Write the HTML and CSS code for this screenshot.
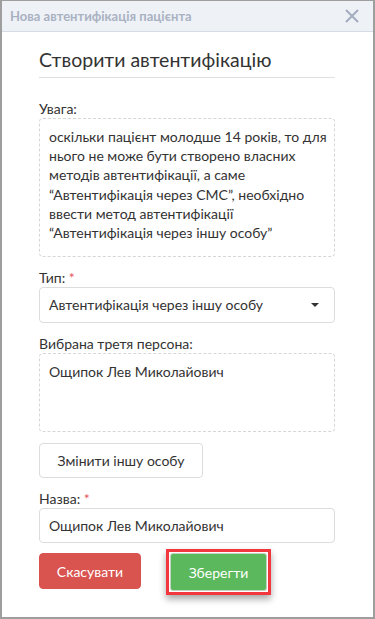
FILE: index.html
```html
<!DOCTYPE html>
<html lang="uk">
<head>
    <meta charset="UTF-8">
    <meta name="viewport" content="width=device-width, initial-scale=1.0">
    <title>Нова автентифікація пацієнта</title>
    <link rel="stylesheet" href="styles.css">
</head>
<body>
    <div class="modal">
        <div class="modal-header">
            <span class="modal-title">Нова автентифікація пацієнта</span>
            <button class="close" aria-label="Закрити">
                <svg width="14" height="14" viewBox="0 0 14 14">
                    <path d="M1 1 L13 13 M13 1 L1 13" stroke="#a3adbd" stroke-width="2" fill="none"/>
                </svg>
            </button>
        </div>

        <div class="modal-body">
            <h2 class="page-title">Створити автентифікацію</h2>

            <div class="field">
                <label>Увага:</label>
                <div class="note">
                    оскільки пацієнт молодше 14 років, то для нього не може бути створено власних методів автентифікації, а саме “Автентифікація через СМС”, необхідно ввести метод автентифікації “Автентифікація через іншу особу”
                </div>
            </div>

            <div class="field">
                <label>Тип: <span class="req">*</span></label>
                <div class="select">Автентифікація через іншу особу</div>
            </div>

            <div class="field">
                <label>Вибрана третя персона:</label>
                <div class="note person">Ощипок Лев Миколайович</div>
            </div>

            <div class="field">
                <button class="btn btn-default">Змінити іншу особу</button>
            </div>

            <div class="field">
                <label>Назва: <span class="req">*</span></label>
                <input class="input" type="text" value="Ощипок Лев Миколайович">
            </div>

            <div class="actions">
                <button class="btn btn-danger">Скасувати</button>
                <span class="marked">
                    <button class="btn btn-success">Зберегти</button>
                </span>
            </div>
        </div>
    </div>
</body>
</html>
```

FILE: styles.css
```css
* {
    box-sizing: border-box;
}

body {
    margin: 0;
    font-family: "Lato", "Roboto", sans-serif;
    color: #333;
    background: #fff;
}

.modal {
    width: 375px;
    height: 619px;
    border: 2px solid #9e9e9e;
    border-top-width: 1px;
    background: #fff;
}

.modal-header {
    height: 31px;
    display: flex;
    align-items: center;
    justify-content: space-between;
    padding: 0 10px 0 8px;
    background: #eef1f6;
    border-bottom: 1px solid #d6dce6;
}

.modal-title {
    font-size: 13px;
    font-weight: bold;
    color: #a9b2c2;
}

.close {
    border: none;
    background: none;
    padding: 0;
    width: 14px;
    height: 14px;
    display: flex;
    margin-right: 4px;
}

.modal-body {
    padding: 14px 38px 0 37px;
}

.page-title {
    margin: 0;
    font-size: 19.5px;
    font-weight: normal;
    line-height: 28px;
    padding-bottom: 3px;
    border-bottom: 1px solid #e0e0e0;
    color: #333;
}

.field {
    margin-top: 11px;
}

.page-title + .field {
    margin-top: 21px;
}

label {
    display: block;
    font-size: 14px;
    line-height: 19px;
}

.req {
    color: #e9545f;
}

.note {
    border: 1px dashed #d6d6d6;
    border-radius: 4px;
    padding: 8px 3px 14px 9px;
    font-size: 14px;
    line-height: 19.2px;
    min-height: 138px;
}

.note.person {
    min-height: 79px;
}

.select,
.input {
    display: block;
    width: 100%;
    height: 36px;
    border: 1px solid #dcdcdc;
    border-radius: 4px;
    padding: 0 9px;
    font-family: inherit;
    font-size: 14px;
    color: #333;
    line-height: 34px;
    position: relative;
    background: #fff;
}

.select::after {
    content: "";
    position: absolute;
    right: 15px;
    top: 15px;
    border-left: 4px solid transparent;
    border-right: 4px solid transparent;
    border-top: 4px solid #333;
}

.input {
    height: 35px;
    outline: none;
}

.btn {
    font-family: inherit;
    font-size: 14px;
    height: 36px;
    padding: 0 16px;
    border-radius: 4px;
    cursor: pointer;
    white-space: nowrap;
}

.btn-default {
    background: #fff;
    border: 1px solid #dcdcdc;
    color: #333;
    width: 164px;
    height: 35px;
}

.actions {
    display: flex;
    align-items: flex-start;
    gap: 25px;
    margin-top: 10px;
}

.btn-danger {
    background: #d9534f;
    border: 1px solid #d9534f;
    color: #fff;
    width: 102px;
}

.marked {
    display: flex;
    margin-top: -4px;
    padding: 1px;
    border: 3px solid #f2373f;
    box-shadow: 0 4px 7px rgba(0, 0, 0, 0.35);
}

.btn-success {
    background: #5cb85c;
    border: 1px solid #c4d2c4;
    border-radius: 3px;
    color: #fff;
    width: 97px;
    height: 38px;
}
```
